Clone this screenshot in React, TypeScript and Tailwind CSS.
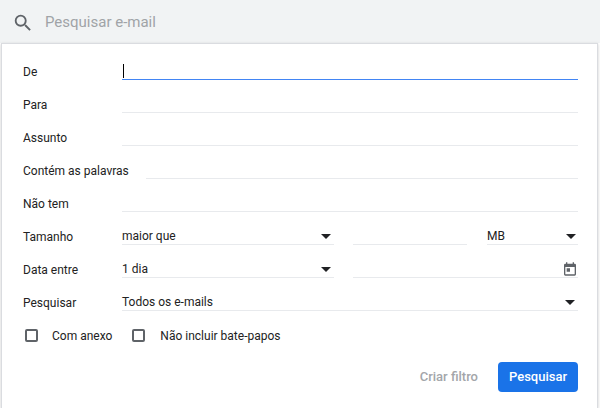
import React from "react";

const Arrow = () => (
  <svg width="10" height="5" viewBox="0 0 10 5" className="shrink-0"><path d="M0 0h10L5 5z" fill="#202124" /></svg>
);

function Row({ label, children, w = 99 }: { label: string; children: React.ReactNode; w?: number }) {
  return (
    <div className="flex h-[33px] items-center">
      <div className={(w === 99 ? "w-[99px]" : "w-[123px]") + " shrink-0 text-[12px] text-[#222]"}>{label}</div>
      {children}
    </div>
  );
}

const F = "h-[16px] box-content border-b border-[#e8eaed] flex items-center text-[12px] text-[#222]";

export default function App() {
  return (
    <div className="w-[600px] h-[408px] bg-white overflow-hidden" style={{ fontFamily: "Roboto, 'Liberation Sans', sans-serif" }}>
      <div className="h-[43px] bg-[#f1f3f4] flex items-center pl-[12px] pt-[2px]">
        <svg width="22" height="22" viewBox="0 0 24 24"><path fill="#5f6368" d="M15.5 14h-.79l-.28-.27A6.47 6.47 0 0 0 16 9.5 6.5 6.5 0 1 0 9.5 16c1.61 0 3.09-.59 4.23-1.57l.27.28v.79l5 4.99L20.49 19l-4.99-5zm-6 0C7.01 14 5 11.99 5 9.5S7.01 5 9.5 5 14 7.01 14 9.5 11.99 14 9.5 14z"/></svg>
        <span className="ml-[11px] text-[15px] text-[#a0a3a7]">Pesquisar e-mail</span>
      </div>
      <div className="mx-[1px] w-[597px] h-[365px] border-x border-t border-[#dadce0] shadow-[0_1px_3px_rgba(0,0,0,0.2)] pl-[21px] pr-[19px] pt-[11px]">
        <Row label="De">
          <div className={"flex-1 " + F + " !border-[#4285f4]"}>
            <div className="w-px h-[14px] bg-black ml-[1px]" />
          </div>
        </Row>
        <Row label="Para"><div className={"flex-1 " + F} /></Row>
        <Row label="Assunto"><div className={"flex-1 " + F} /></Row>
        <Row label="Contém as palavras" w={123}><div className={"flex-1 " + F} /></Row>
        <Row label="Não tem"><div className={"flex-1 " + F} /></Row>
        <Row label="Tamanho">
          <div className={"w-[209px] justify-between pr-[3px] " + F}>maior que<Arrow /></div>
          <div className={"w-[114px] ml-[19px] " + F} />
          <div className={"flex-1 ml-[20px] justify-between pr-[2px] " + F}>MB<Arrow /></div>
        </Row>
        <Row label="Data entre">
          <div className={"w-[209px] justify-between pr-[3px] " + F}>1 dia<Arrow /></div>
          <div className={"flex-1 ml-[19px] justify-end " + F}>
            <svg width="16" height="16" viewBox="0 0 24 24"><path fill="#5f6368" d="M19 4h-1V2h-2v2H8V2H6v2H5a2 2 0 0 0-2 2v14a2 2 0 0 0 2 2h14a2 2 0 0 0 2-2V6a2 2 0 0 0-2-2zm0 16H5V9h14v11zM7 11h5v5H7z"/></svg>
          </div>
        </Row>
        <Row label="Pesquisar">
          <div className={"flex-1 justify-between pr-[3px] " + F}>Todos os e-mails<Arrow /></div>
        </Row>
        <div className="flex h-[33px] items-center text-[12px] text-[#222]">
          <div className="w-[13px] h-[13px] border-2 border-[#5f6368] rounded-[2px] ml-[2px]" />
          <span className="ml-[14px]">Com anexo</span>
          <div className="w-[13px] h-[13px] border-2 border-[#5f6368] rounded-[2px] ml-[20px]" />
          <span className="ml-[15px]">Não incluir bate-papos</span>
        </div>
        <div className="flex justify-end items-center mt-[10px]">
          <span className="text-[13px] font-medium text-[#a3a6aa] mr-[20px]">Criar filtro</span>
          <div className="w-[80px] h-[30px] rounded bg-[#1a73e8] text-white text-[13px] font-medium flex items-center justify-center">Pesquisar</div>
        </div>
      </div>
    </div>
  );
}
